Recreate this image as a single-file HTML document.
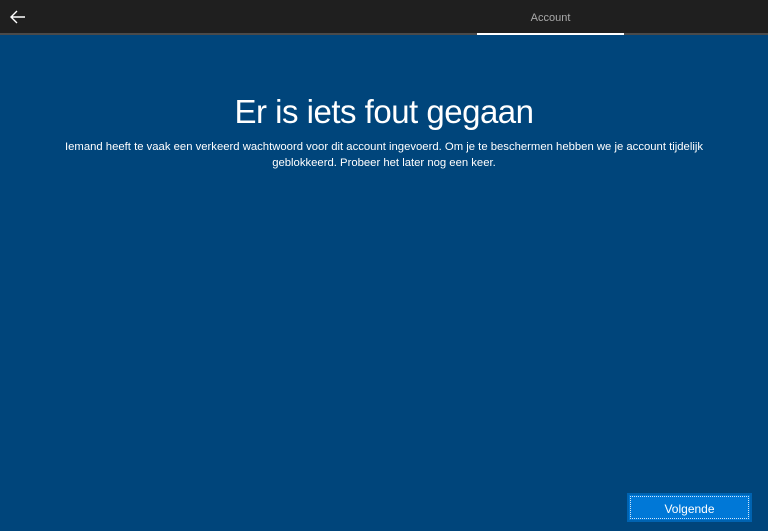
<!DOCTYPE html>
<html><head><style>
html,body{margin:0;padding:0;width:768px;height:531px;overflow:hidden;background:#00457b;font-family:"Liberation Sans",sans-serif;}
.hdr{position:absolute;left:0;top:0;width:768px;height:33px;background:#1f1f1f;}
.line{position:absolute;left:0;top:33px;width:768px;height:2px;background:#4a4a4a;}
.ul{position:absolute;left:477px;top:33px;width:147px;height:2px;background:#fff;}
.tab{position:absolute;left:477px;width:147px;top:12px;text-align:center;color:#aaa;font-size:11px;}
.back{position:absolute;left:9px;top:9px;}
h1{position:absolute;top:93px;left:0;width:768px;margin:0;text-align:center;color:#fff;font-weight:normal;font-size:33px;letter-spacing:-0.5px;}
p{position:absolute;top:139px;left:20px;width:728px;margin:0;text-align:center;color:#fff;font-size:11.3px;line-height:16px;}
.btn{position:absolute;left:627px;top:493px;width:125px;height:29px;background:#0078d7;box-sizing:border-box;border:2px solid #0063b1;color:#fff;font-size:12px;text-align:center;line-height:28px;}
.btn:after{content:"";position:absolute;left:1px;top:1px;right:1px;bottom:1px;border:1px dotted #cfe4f7;}
</style></head><body>
<div class="hdr"></div>
<div class="line"></div><div class="ul"></div>
<div class="tab">Account</div>
<svg class="back" width="18" height="16" viewBox="0 0 18 16"><path d="M16 8H2M8 2L2 8l6 6" stroke="#fff" stroke-width="1.4" fill="none"/></svg>
<h1>Er is iets fout gegaan</h1>
<p>Iemand heeft te vaak een verkeerd wachtwoord voor dit account ingevoerd. Om je te beschermen hebben we je account tijdelijk<br>geblokkeerd. Probeer het later nog een keer.</p>
<div class="btn">Volgende</div>
</body></html>
